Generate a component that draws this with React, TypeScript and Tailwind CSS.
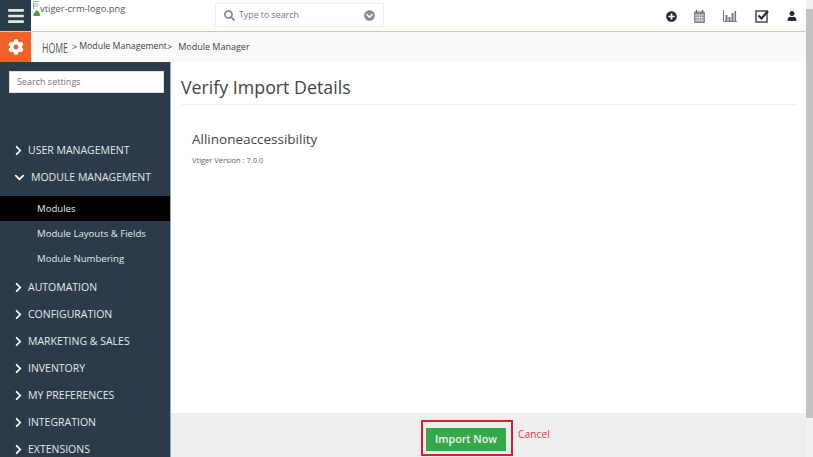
import React from "react";
import {
  FaBars, FaCog, FaChevronRight, FaChevronDown, FaPlusCircle,
  FaUser, FaSearch, FaChevronCircleDown,
} from "react-icons/fa";

const font = { fontFamily: '"Open Sans", sans-serif' };

function BrokenImage() {
  return (
    <svg width="16" height="16" viewBox="0 0 16 16" className="shrink-0">
      <path d="M0.5 8V0.5h6" fill="none" stroke="#a8a8a8" />
      <path d="M1 2h4.5v4H1z" fill="#c4d6f0" />
      <path d="M0.5 13l3-4 2.5 2 1.5 4h-7z" fill="#4f9e3f" />
    </svg>
  );
}

function CalendarIcon() {
  return (
    <svg width="11" height="13" viewBox="0 0 11 13" className="ml-[17px]">
      <rect x="0" y="1.5" width="11" height="11.5" rx="1" fill="#8a8a8a" />
      <path d="M2.5 0v3M8.5 0v3" stroke="#6a6a6a" strokeWidth="1.4" />
      <path d="M1 5h9M1 7.5h9M1 10h9M3.2 4.5v7.5M5.5 4.5v7.5M7.8 4.5v7.5" stroke="#e2e2e2" strokeWidth="0.8" />
    </svg>
  );
}

function ChartIcon() {
  return (
    <svg width="14" height="12" viewBox="0 0 14 12" className="ml-[18px]">
      <path d="M0.5 0v11.5H14" fill="none" stroke="#777" />
      <path d="M2.5 5h2v6h-2zM5.5 7h2v4h-2zM8.5 3h2v8h-2zM11.5 1h1.6v10h-1.6z" fill="#777" />
    </svg>
  );
}

function CheckIcon() {
  return (
    <svg width="14" height="14" viewBox="0 0 14 14" className="ml-[18px]">
      <rect x="1" y="2" width="11" height="11" fill="none" stroke="#555" strokeWidth="1.6" />
      <path d="M3.5 6.5l3 3L13 2" fill="none" stroke="#2b2b2b" strokeWidth="2.2" />
    </svg>
  );
}

function NavItem({ label, open }: { label: string; open?: boolean }) {
  return (
    <div className={`flex h-[27px] items-center text-[10.5px] text-[#e4e8ec] ${open ? "gap-[6px] pl-[14px]" : "gap-[4px] pl-[13px]"}`}>
      {open ? <FaChevronDown className="text-[11px] text-white" /> : <FaChevronRight className="text-[11px] text-white" />}
      <span>{label}</span>
    </div>
  );
}

function SubItem({ label, active }: { label: string; active?: boolean }) {
  return (
    <div className={`flex h-[25px] items-center pl-[37px] pt-[1px] text-[9.6px] text-[#e4e8ec] ${active ? "bg-black" : ""}`}>{label}</div>
  );
}

export default function App() {
  return (
    <div className="flex h-[457px] w-[813px] overflow-hidden bg-white" style={font}>
      <div className="flex h-full w-[806px] flex-col">
        <header className="flex h-[32px] shrink-0 items-start border-b border-[#f5bd9f] bg-white">
          <div className="flex h-[31px] w-[31px] items-center justify-center bg-[#2c3b49]">
            <FaBars className="text-[18px] text-[#e8e8e8]" />
          </div>
          <div className="flex w-[184px] items-center pl-[2px] pt-[1px] text-[9.4px] leading-[14px] text-[#555]">
            <BrokenImage />
            <span className="-ml-[9px]">vtiger-crm-logo.png</span>
          </div>
          <div className="mt-[3px] flex h-[24px] w-[169px] items-center border border-[#eeeeee] pl-[8px] pr-[8px] text-[8.8px] text-[#777]">
            <FaSearch className="text-[11px] text-[#8a8a8a]" />
            <span className="ml-[4px] mt-[1px] flex-1">Type to search</span>
            <FaChevronCircleDown className="text-[11px] text-[#8a8a8a]" />
          </div>
          <div className="ml-auto mr-[9px] mt-[9px] flex items-center text-[#2b2b2b]">
            <FaPlusCircle className="text-[11px]" />
            <CalendarIcon />
            <ChartIcon />
            <CheckIcon />
            <FaUser className="ml-[18px] text-[10px]" />
          </div>
        </header>
        <div className="flex h-[30px] shrink-0 items-center bg-[#fafafa]">
          <div className="flex h-[30px] w-[31px] items-center justify-center bg-[#f26125]">
            <FaCog className="text-[16px] text-white" />
          </div>
          <span className="ml-[11px] w-[26px] origin-left scale-x-[0.58] whitespace-nowrap text-[15px] text-[#4a5a68]">HOME</span>
          <span className="ml-[4px] text-[9px] text-[#444]">&gt;</span>
          <span className="ml-[2px] text-[8.8px] text-[#444]">Module Management</span>
          <span className="text-[9px] text-[#444]">&gt;</span>
          <span className="ml-[6px] text-[9px] text-[#444]">Module Manager</span>
        </div>
        <div className="flex min-h-0 flex-1">
          <aside className="w-[171px] shrink-0 overflow-hidden border-r border-[#9aa5ae] bg-[#2c3b49]">
            <div className="mx-[9px] mt-[9px] flex h-[22px] w-[155px] items-center border border-[#ddd] bg-white pl-[7px] text-[9px] text-[#777]">
              Search settings
            </div>
            <div className="mt-[44px]">
              <NavItem label="USER MANAGEMENT" />
              <NavItem label="MODULE MANAGEMENT" open />
              <div className="mt-[5px]">
                <SubItem label="Modules" active />
                <SubItem label="Module Layouts & Fields" />
                <SubItem label="Module Numbering" />
              </div>
              <div className="mt-[3px]">
                <NavItem label="AUTOMATION" />
                <NavItem label="CONFIGURATION" />
                <NavItem label="MARKETING & SALES" />
                <NavItem label="INVENTORY" />
                <NavItem label="MY PREFERENCES" />
                <NavItem label="INTEGRATION" />
                <NavItem label="EXTENSIONS" />
              </div>
            </div>
          </aside>
          <main className="flex min-w-0 flex-1 flex-col">
            <div className="flex-1 pl-[10px] pr-[10px]">
              <h1 className="flex h-[43px] items-center border-b border-[#f0f0f0] pt-[8px] text-[17.8px] font-normal text-[#444]">
                Verify Import Details
              </h1>
              <h2 className="ml-[11px] mt-[24px] text-[13.5px] leading-[20px] font-normal text-[#444]">Allinoneaccessibility</h2>
              <p className="ml-[11px] mt-[5px] text-[7.5px] leading-[12px] text-[#666]">Vtiger Version : 7.0.0</p>
            </div>
            <footer className="flex h-[44px] shrink-0 items-start bg-[#eeeeee] pl-[250px] pt-[7px]">
              <div className="border-2 border-[#d8202a] py-[3px] pl-[3px] pr-[5px]">
                <button className="h-[23px] w-[80px] bg-[#35a84a] text-[10.7px] font-semibold text-[#f2f2f2]">Import Now</button>
              </div>
              <span className="ml-[5px] mt-[7px] text-[10.3px] text-[#e8383c]">Cancel</span>
            </footer>
          </main>
        </div>
      </div>
      <div className="flex h-full w-[7px] flex-col bg-[#f1f1f1]">
        <div className="mt-[9px] h-[409px] bg-[#c1c1c1]" />
      </div>
    </div>
  );
}
